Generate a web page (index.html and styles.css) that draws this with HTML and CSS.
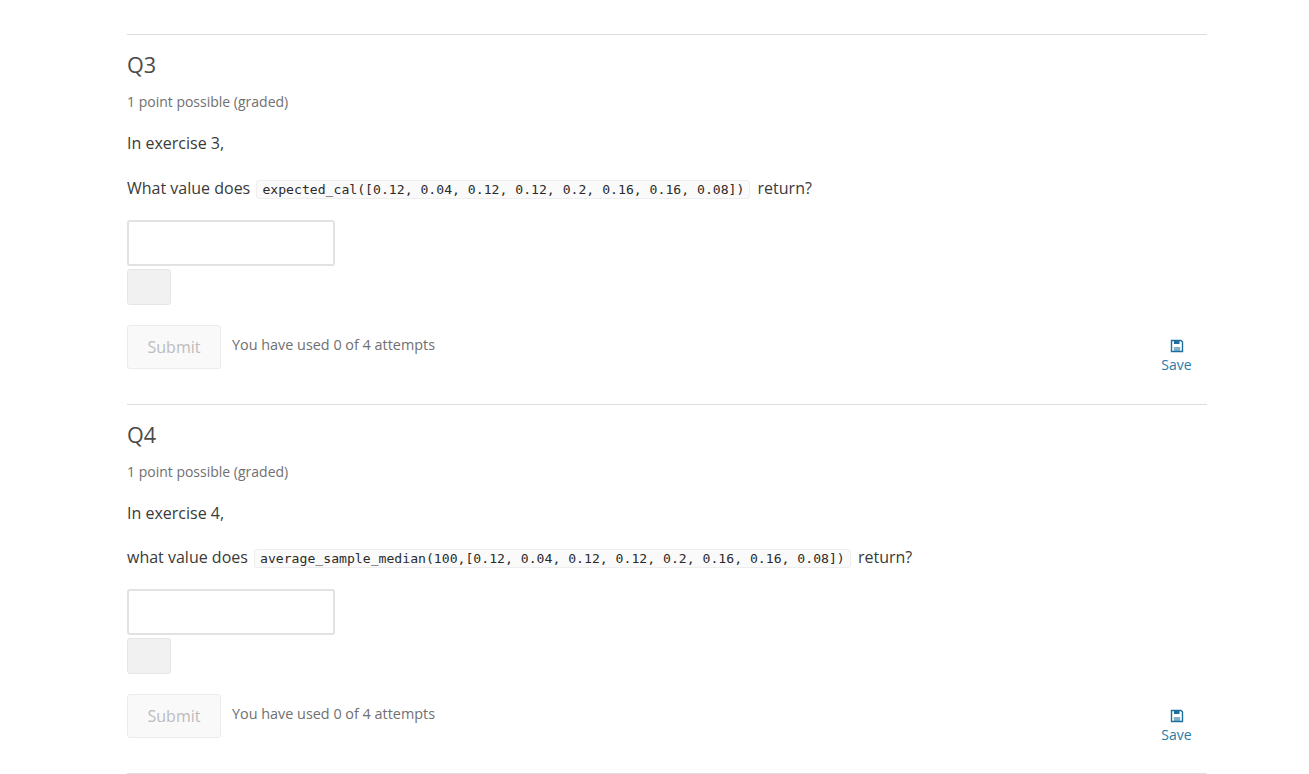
FILE: index.html
```html
<!DOCTYPE html>
<html lang="en">
<head>
    <meta charset="UTF-8">
    <title>Problem set</title>
    <link rel="stylesheet" href="styles.css">
</head>
<body>

    <div class="container">
        <div class="problem">
            <h3>Q3</h3>
            <div class="points">1 point possible (graded)</div>
            <p class="intro">In exercise 3,</p>
            <p class="prompt">What value does <code>expected_cal([0.12, 0.04, 0.12, 0.12, 0.2, 0.16, 0.16, 0.08])</code> return?</p>
            <input class="answer" type="text">
            <div class="status-box"></div>
            <div class="actions">
                <button class="submit" disabled>Submit</button>
                <span class="attempts">You have used 0 of 4 attempts</span>
                <a class="save" href="#">
                    <svg class="save-icon" viewBox="0 0 14 14"><path d="M1.5 1.5h9.5l1.5 1.5v9.5h-11z" fill="none" stroke="#1d6f9f" stroke-width="1.4"/><path d="M4 1.5h5.5v3.5h-5.5z" fill="#1d6f9f"/><path d="M3.8 8h6.4v4.5h-6.4z" fill="#1d6f9f" opacity="0.55"/></svg>
                    <span>Save</span>
                </a>
            </div>
        </div>

        <div class="problem">
            <h3>Q4</h3>
            <div class="points">1 point possible (graded)</div>
            <p class="intro">In exercise 4,</p>
            <p class="prompt">what value does <code>average_sample_median(100,[0.12, 0.04, 0.12, 0.12, 0.2, 0.16, 0.16, 0.08])</code> return?</p>
            <input class="answer" type="text">
            <div class="status-box"></div>
            <div class="actions">
                <button class="submit" disabled>Submit</button>
                <span class="attempts">You have used 0 of 4 attempts</span>
                <a class="save" href="#">
                    <svg class="save-icon" viewBox="0 0 14 14"><path d="M1.5 1.5h9.5l1.5 1.5v9.5h-11z" fill="none" stroke="#1d6f9f" stroke-width="1.4"/><path d="M4 1.5h5.5v3.5h-5.5z" fill="#1d6f9f"/><path d="M3.8 8h6.4v4.5h-6.4z" fill="#1d6f9f" opacity="0.55"/></svg>
                    <span>Save</span>
                </a>
            </div>
        </div>
    </div>

</body>
</html>
```

FILE: styles.css
```css
* { margin: 0; padding: 0; box-sizing: border-box; }
html, body { height: 100%; overflow: hidden; }
body {
    background-color: #fff;
    color: #3a3a3a;
    font-family: 'Open Sans', sans-serif;
}
.container {
    width: 1080px;
    margin-left: 127px;
    padding-top: 34px;
}
.problem {
    border-top: 1px solid #ddd;
    height: 369.5px;
    padding-top: 14px;
}
.problem:last-child { border-bottom: 1px solid #ddd; height: 370px; }
h3 {
    font-size: 21.6px;
    font-weight: 400;
    line-height: 32px;
    color: #4a4a4a;
}
.points {
    margin-top: 11px;
    font-size: 14px;
    line-height: 20px;
    color: #707070;
}
.intro, .prompt {
    font-size: 16px;
    line-height: 24px;
}
.intro { margin-top: 19px; }
.prompt { margin-top: 20.6px; }
code {
    display: inline-block;
    margin: 0 3px 0 2px;
    padding: 0 5px;
    font-family: 'DejaVu Sans Mono', monospace;
    font-size: 13.14px;
    line-height: 17px;
    color: #2a2a2a;
    background-color: #fafafa;
    border: 1px solid #eee;
    border-radius: 3px;
}
.answer {
    display: block;
    width: 208px;
    height: 46px;
    margin-top: 20px;
    border: 2px solid #e2e2e2;
    border-radius: 3px;
    background-color: #fff;
}
.status-box {
    width: 44px;
    height: 36px;
    margin-top: 3px;
    background-color: #f1f1f1;
    border: 1px solid #e6e6e6;
    border-radius: 3px;
}
.actions {
    display: flex;
    align-items: flex-start;
    margin-top: 20px;
}
.submit {
    width: 94px;
    height: 44px;
    font-family: 'Open Sans', sans-serif;
    font-size: 16px;
    color: #bcbcbc;
    background-color: #f9f9f9;
    border: 1px solid #ebebeb;
    border-radius: 3px;
}
.attempts {
    margin-left: 11px;
    margin-top: 10px;
    font-size: 14.4px;
    line-height: 20px;
    color: #707070;
}
.save {
    display: flex;
    flex-direction: column;
    align-items: center;
    width: 31px;
    margin-left: auto;
    margin-right: 15px;
    margin-top: 14px;
    font-size: 14px;
    line-height: 20px;
    color: #2a7aa8;
    text-decoration: none;
}
.problem:last-child .save { margin-top: 15px; }
.save-icon { width: 14px; height: 14px; margin-bottom: 2px; }
```
